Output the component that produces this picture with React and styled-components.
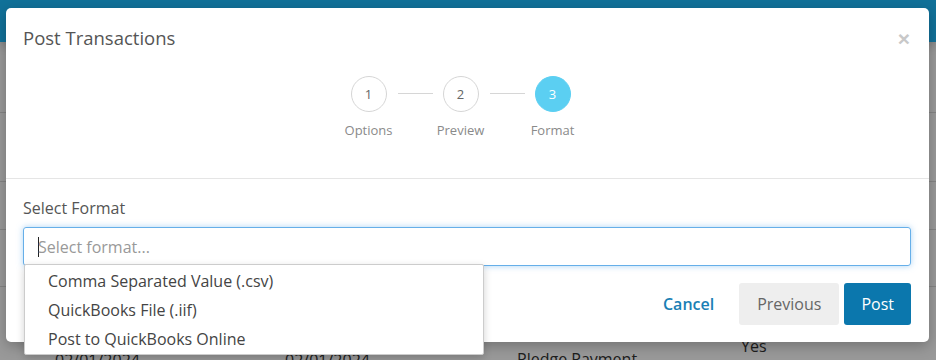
import React from "react";
import styled, { createGlobalStyle } from "styled-components";

const GlobalStyle = createGlobalStyle`
  * { box-sizing: border-box; }
  body {
    margin: 0;
    font-family: "Open Sans", "Noto Sans", sans-serif;
    color: #333;
    background: #fff;
  }
`;

const Page = styled.div`
  position: relative;
  width: 936px;
  height: 360px;
  overflow: hidden;
  background: #fff;
`;

const TopBar = styled.div`
  height: 42px;
  background: #1dbcff;
  box-shadow: 0 3px 10px rgba(0, 0, 0, 0.2);
`;

const Toolbar = styled.div`
  height: 71px;
  border-bottom: 1px solid #ddd;
`;

const Row = styled.div`
  display: grid;
  grid-template-columns: 55px 230px 232px 224px 1fr;
  height: ${(p) => p.h}px;
  border-bottom: 1px solid #ddd;
  font-size: 16px;
  color: #333;
`;

const Cell = styled.div`
  padding-top: ${(p) => p.top || 0}px;
  white-space: nowrap;
`;

const Backdrop = styled.div`
  position: absolute;
  inset: 0;
  background: rgba(0, 0, 0, 0.4);
`;

const Modal = styled.div`
  position: absolute;
  left: 6px;
  top: 8px;
  width: 923px;
  height: 334px;
  background: #fff;
  border-radius: 5px;
  box-shadow: 0 4px 14px rgba(0, 0, 0, 0.25);
  display: flex;
  flex-direction: column;
`;

const Header = styled.div`
  height: 171px;
  padding: 16px 19px 0 17px;
  border-bottom: 1px solid #e5e5e5;
  display: flex;
  flex-direction: column;
`;

const TitleRow = styled.div`
  display: flex;
  justify-content: space-between;
  align-items: center;
`;

const Title = styled.h4`
  margin: 0;
  font-size: 18.5px;
  font-weight: 400;
  line-height: 28px;
  color: #555;
`;

const Close = styled.button`
  border: none;
  background: none;
  padding: 0;
  font-family: "Liberation Sans", sans-serif;
  font-size: 21px;
  font-weight: 700;
  line-height: 1;
  color: #c8c8c8;
  cursor: pointer;
`;

const Stepper = styled.div`
  display: flex;
  justify-content: center;
  margin-top: 24px;
  padding-right: 12px;
`;

const Step = styled.div`
  width: 36px;
  display: flex;
  flex-direction: column;
  align-items: center;
`;

const Circle = styled.div`
  width: 36px;
  height: 36px;
  border-radius: 50%;
  border: 1px solid ${(p) => (p.active ? "#5bcff2" : "#d6d6d6")};
  background: ${(p) => (p.active ? "#5bcff2" : "#fff")};
  color: ${(p) => (p.active ? "#fff" : "#666")};
  font-size: 13px;
  display: flex;
  align-items: center;
  justify-content: center;
`;

const StepLabel = styled.div`
  margin-top: 8px;
  font-size: 13px;
  line-height: 20px;
  color: #8a8a8a;
  white-space: nowrap;
`;

const Connector = styled.div`
  width: 35px;
  height: 1px;
  margin: 17px 10px 0 11px;
  background: #d6d6d6;
`;

const Body = styled.div`
  padding: 18px 18px 0 17px;
  display: flex;
  flex-direction: column;
`;

const Label = styled.label`
  font-size: 16px;
  line-height: 23px;
  color: #555;
  margin-bottom: 7px;
`;

const Field = styled.div`
  position: relative;
`;

const Input = styled.div`
  height: 39px;
  border: 1px solid #66afe9;
  border-radius: 3px;
  box-shadow: 0 0 6px rgba(102, 175, 233, 0.55);
  display: flex;
  align-items: center;
  padding-left: 14px;
  font-size: 16px;
`;

const Caret = styled.span`
  width: 1px;
  height: 20px;
  margin-right: -1px;
  background: #222;
`;

const Placeholder = styled.span`
  color: #999;
`;

const Menu = styled.ul`
  position: absolute;
  left: 1px;
  top: 37px;
  width: 460px;
  margin: 0;
  padding: 2px 0 0;
  list-style: none;
  background: #fff;
  border: 1px solid #ccc;
  border-radius: 2px;
  box-shadow: 0 3px 8px rgba(0, 0, 0, 0.18);
  z-index: 2;
`;

const MenuItem = styled.li`
  padding: 0 23px;
  height: 29px;
  line-height: 29px;
  font-size: 16px;
  color: #444;
`;

const Footer = styled.div`
  display: flex;
  justify-content: flex-end;
  align-items: center;
  gap: 5px;
  margin-top: 17px;
`;

const Button = styled.button`
  height: 42px;
  padding: 0 ${(p) => p.pad || 18}px;
  border: none;
  border-radius: 3px;
  font-family: inherit;
  font-size: 16px;
  cursor: pointer;
  background: ${(p) =>
    p.variant === "primary" ? "#0b77ad" : p.variant === "link" ? "transparent" : "#eeeeee"};
  color: ${(p) =>
    p.variant === "primary" ? "#fff" : p.variant === "link" ? "#1a7fb5" : "#666"};
  font-weight: ${(p) => (p.variant === "link" ? 600 : 400)};
  margin-right: ${(p) => (p.variant === "link" ? 8 : 0)}px;
`;

const steps = [
  { n: 1, label: "Options" },
  { n: 2, label: "Preview" },
  { n: 3, label: "Format", active: true },
];

const formats = [
  "Comma Separated Value (.csv)",
  "QuickBooks File (.iif)",
  "Post to QuickBooks Online",
];

const App = () => {
  return (
    <Page>
      <GlobalStyle />
      <TopBar />
      <Toolbar />
      <Row h={69} />
      <Row h={48} />
      <Row h={57} />
      <Row h={80}>
        <div />
        <Cell top={62}>02/01/2024</Cell>
        <Cell top={62}>02/01/2024</Cell>
        <Cell top={61}>Pledge Payment</Cell>
        <Cell top={48}>Yes</Cell>
      </Row>
      <Backdrop />
      <Modal>
        <Header>
          <TitleRow>
            <Title>Post Transactions</Title>
            <Close type="button">×</Close>
          </TitleRow>
          <Stepper>
            {steps.map((s, i) => (
              <React.Fragment key={s.n}>
                {i > 0 && <Connector />}
                <Step>
                  <Circle active={s.active}>{s.n}</Circle>
                  <StepLabel>{s.label}</StepLabel>
                </Step>
              </React.Fragment>
            ))}
          </Stepper>
        </Header>
        <Body>
          <Label>Select Format</Label>
          <Field>
            <Input>
              <Caret />
              <Placeholder>Select format...</Placeholder>
            </Input>
            <Menu>
              {formats.map((f) => (
                <MenuItem key={f}>{f}</MenuItem>
              ))}
            </Menu>
          </Field>
          <Footer>
            <Button variant="link" pad={12}>
              Cancel
            </Button>
            <Button pad={18}>Previous</Button>
            <Button variant="primary" pad={17}>
              Post
            </Button>
          </Footer>
        </Body>
      </Modal>
    </Page>
  );
};

export default App;
